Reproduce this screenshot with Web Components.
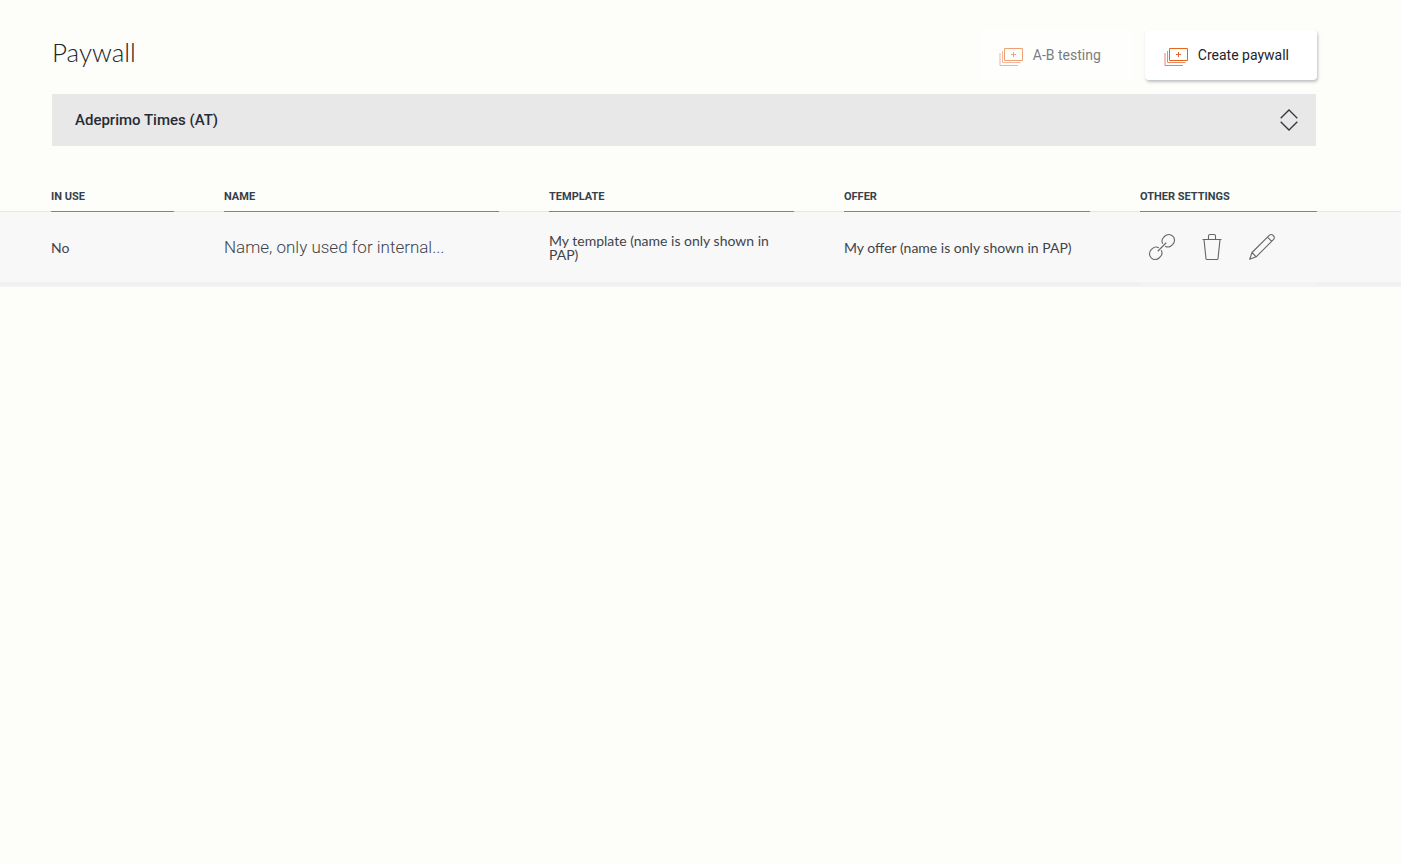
<!DOCTYPE html>
<html lang="en">
<head>
<meta charset="utf-8">
<meta name="viewport" content="width=device-width, initial-scale=1">
<title>Paywall</title>
<style>
  body { margin: 0; background: #fdfefa; color: #30373f; font-family: Roboto, "Open Sans", sans-serif; }
</style>
</head>
<body>
<paywall-page>
  <action-button slot="actions" muted>A-B testing</action-button>
  <action-button slot="actions">Create paywall</action-button>
  <brand-select slot="brand"></brand-select>
  <paywall-table></paywall-table>
</paywall-page>

<script>
class BaseElement extends HTMLElement {
  constructor() {
    super();
    this.attachShadow({ mode: 'open' }).innerHTML = this.constructor.markup;
  }
}

class PaywallPage extends BaseElement {
  static markup = `
    <style>
      :host { display: block; }
      header { display: flex; justify-content: space-between; align-items: flex-start; padding: 30px 84px 0 52px; }
      h1 { margin: 0; padding-top: 4px; font: 300 26px/36px Lato, sans-serif; color: #22252b; }
      .actions { display: flex; gap: 12px; }
      .brand { padding: 14px 85px 36px 52px; }
    </style>
    <header>
      <h1>Paywall</h1>
      <div class="actions"><slot name="actions"></slot></div>
    </header>
    <main>
      <div class="brand"><slot name="brand"></slot></div>
      <slot></slot>
    </main>`;
}

class ActionButton extends BaseElement {
  static markup = `
    <style>
      :host { display: block; }
      button { display: flex; align-items: center; gap: 10px; min-width: 153px; height: 50px; padding: 0 28px 0 19px; border: 0; border-radius: 4px;
        background: #fff; box-shadow: 1px 2px 3px rgba(30, 34, 48, .28); color: #22252b; font: 400 14px/20px Roboto, sans-serif; cursor: pointer; }
      svg { display: block; margin-top: 3px; fill: none; stroke: #e2661c; }
      :host([muted]) button { opacity: .6; box-shadow: none; }
    </style>
    <button type="button">
      <svg width="24" height="19" viewBox="0 0 24 19" aria-hidden="true">
        <path d="M5.500 1.500h18v12h-18z"/>
        <path d="M14.500 5v5M12 7.500h5" stroke="#e4653a"/>
        <path d="M3.500 4v11.500h18" stroke="#ea8a68"/>
        <path d="M1 6v12.500h18" stroke="#e88364"/>
      </svg>
      <span><slot></slot></span>
    </button>`;
}

class BrandSelect extends BaseElement {
  static markup = `
    <style>
      :host { display: grid; align-items: center; }
      select, svg { grid-area: 1 / 1; }
      select { appearance: none; width: 100%; height: 52px; margin: 0; padding: 0 56px 0 23px; border: 0; border-radius: 0;
        background: #e8e8e8; color: #262c35; font: 500 15px/20px Roboto, sans-serif; }
      svg { justify-self: end; margin-right: 18px; fill: none; stroke: #33363d; stroke-width: 1.3; pointer-events: none; }
    </style>
    <select aria-label="Brand"><option>Adeprimo Times (AT)</option></select>
    <svg width="18" height="22" viewBox="0 0 18 22" aria-hidden="true">
      <path d="M.7 9.300 9 1l8.300 8.300M.7 12.700 9 21l8.300-8.300"/>
    </svg>`;
}

class IconButton extends BaseElement {
  static shapes = {
    link: '<g transform="rotate(-45 14 14)"><path d="M11.200 12.300C10.300 9.300 8.500 8.300 6 8.300H4.500C1.200 8.300-1.300 10.800-1.300 14s2.500 5.700 5.800 5.700H6c2.500 0 4.300-1 5.200-4M16.800 12.300c.9-3 2.700-4 5.200-4h1.500c3.300 0 5.800 2.500 5.800 5.700s-2.500 5.700-5.800 5.700H22c-2.500 0-4.300-1-5.200-4M8 14h12"/></g>',
    trash: '<path d="M4.500 6.500h19M6 6.500l2 19.200q.1 .8 1 .8h10q.9 0 1-.8L22 6.500M10.500 6.500V3q0-1.500 1.500-1.500h4q1.500 0 1.500 1.500v3.500"/>',
    edit: '<path d="M1.700 26.300 4 19.500 21.500 2.200c1-1 2.500-1 3.300 0l.8.8c1 1 1 2.300 0 3.300L8.200 23.800zM4 19.500l4.200 4.300M19.500 4.200l4.200 4.200"/>'
  };
  static markup = `
    <style>
      :host { display: block; }
      button { display: block; padding: 0; border: 0; background: none; cursor: pointer; }
      svg { display: block; fill: none; stroke: #666; stroke-width: 1.1; stroke-linejoin: round; overflow: visible; }
    </style>
    <button type="button"><svg width="28" height="28" viewBox="0 0 28 28" aria-hidden="true"></svg></button>`;
  connectedCallback() {
    this.shadowRoot.querySelector('svg').innerHTML = IconButton.shapes[this.getAttribute('icon')];
    this.shadowRoot.querySelector('button').setAttribute('aria-label', this.getAttribute('label'));
  }
}

class PaywallTable extends BaseElement {
  static markup = `
    <style>
      :host { display: block; }
      table, thead, tbody { display: block; }
      tr { display: grid; grid-template-columns: 123fr 275fr 245fr 246fr 177fr; column-gap: 50px; padding: 0 84px 0 51px; }
      th, td { display: block; padding: 0; text-align: left; min-width: 0; }
      table { border-collapse: separate; }
      thead tr { border-bottom: 1px solid #e5e6e3; }
      th { margin-bottom: -1px; padding: 5px 0 4px; border-bottom: 1px solid #e8651f; font-size: 11px; line-height: 20px; font-weight: 700; color: #363f4b; }
      tbody { border-bottom: 2px solid #f3f3f2; }
      tbody tr { align-items: center; height: 70px; background: #f8f8f8; border-bottom: 3px solid #f0f0f0; }
      td { padding-top: 2px; font: 400 14px/14px Lato, sans-serif; color: #3f444b; }
      td.name { padding-top: 0; font: 300 17px/24px Roboto, sans-serif; white-space: nowrap; overflow: hidden; text-overflow: ellipsis; }
      td.tools { display: flex; align-items: center; align-self: stretch; gap: 22px; margin-bottom: -3px; padding: 0 0 0 8px; border-bottom: 3px solid #f3f3f1; }
    </style>
    <table>
      <thead><tr><th scope="col">IN USE</th><th scope="col">NAME</th><th scope="col">TEMPLATE</th><th scope="col">OFFER</th><th scope="col">OTHER SETTINGS</th></tr></thead>
      <tbody><tr>
        <td>No</td>
        <td class="name">Name, only used for internal...</td>
        <td>My template (name is only shown in PAP)</td>
        <td>My offer (name is only shown in PAP)</td>
        <td class="tools">
          <icon-button icon="link" label="Link"></icon-button>
          <icon-button icon="trash" label="Delete"></icon-button>
          <icon-button icon="edit" label="Edit"></icon-button>
        </td>
      </tr></tbody>
    </table>`;
}

customElements.define('icon-button', IconButton);
customElements.define('action-button', ActionButton);
customElements.define('brand-select', BrandSelect);
customElements.define('paywall-table', PaywallTable);
customElements.define('paywall-page', PaywallPage);
</script>
</body>
</html>
